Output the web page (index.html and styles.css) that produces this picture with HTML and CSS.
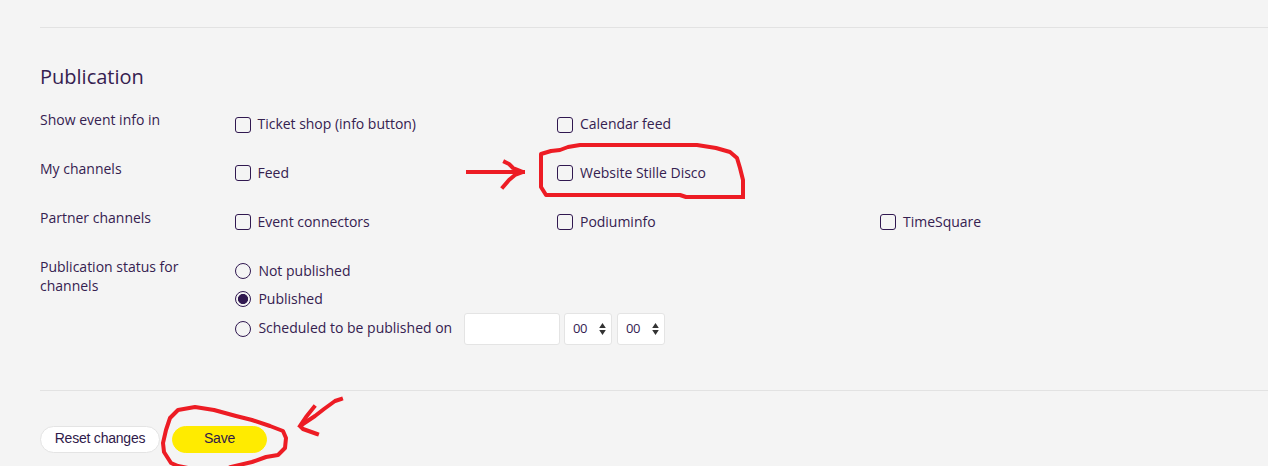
FILE: index.html
```
<!DOCTYPE html>
<html lang="en">
<head>
<meta charset="utf-8">
<title>Publication</title>
<link rel="stylesheet" href="styles.css">
</head>
<body>
<main class="page">
  <section class="publication">
    <h2 class="title">Publication</h2>
    <div class="row">
      <div class="label">Show event info in</div>
      <div class="options">
        <label class="option"><span class="box"></span><span class="text">Ticket shop (info button)</span></label>
        <label class="option"><span class="box"></span><span class="text">Calendar feed</span></label>
      </div>
    </div>
    <div class="row raised">
      <div class="label">My channels</div>
      <div class="options">
        <label class="option"><span class="box"></span><span class="text">Feed</span></label>
        <label class="option"><span class="box"></span><span class="text">Website Stille Disco</span></label>
      </div>
    </div>
    <div class="row raised">
      <div class="label">Partner channels</div>
      <div class="options">
        <label class="option"><span class="box"></span><span class="text">Event connectors</span></label>
        <label class="option"><span class="box"></span><span class="text">Podiuminfo</span></label>
        <label class="option"><span class="box"></span><span class="text">TimeSquare</span></label>
      </div>
    </div>
    <div class="row status">
      <div class="label">Publication status for channels</div>
      <div class="radios">
        <label class="choice"><span class="radio"></span><span class="text">Not published</span></label>
        <label class="choice second"><span class="radio checked"></span><span class="text">Published</span></label>
        <div class="choice schedule">
          <span class="radio"></span><span class="text">Scheduled to be published on</span>
          <span class="field date"></span>
          <span class="field time">00<svg class="arrows" width="7" height="12" viewBox="0 0 7 12"><path d="M3.5 0 6.8 5H.2zM3.5 12 6.8 7H.2z"/></svg></span>
          <span class="field time">00<svg class="arrows" width="7" height="12" viewBox="0 0 7 12"><path d="M3.5 0 6.8 5H.2zM3.5 12 6.8 7H.2z"/></svg></span>
        </div>
      </div>
    </div>
  </section>
  <footer class="actions">
    <button class="button reset"><span>Reset changes</span></button>
    <button class="button save"><span>Save</span></button>
  </footer>
  <svg class="marks" width="1268" height="466" viewBox="0 0 1268 466">
    <path d="M468 172H523M505 162 509 164 513 168 523 172 515 175 509 180 503 187"/>
    <path d="M743 197H686L680 195H546L541 187V154L551 151 560 150 568 147 580 145H697L716 148 730 152 737 158 740 168 743 180V197"/>
    <path d="M188 468 178 466 171 463 164 452 163 443 166 430 170 418 178 410 195 407 214 410 236 416 252 420 270 426 283 431 286 438 285 448 278 455 266 457 252 462 231 467"/>
    <path d="M341 399 335 401 324 409 315 416 300 426 303 429 317 434M314 407 306 417 300 426"/>
  </svg>
</main>
</body>
</html>
```
FILE: styles.css
```
* { box-sizing: border-box; }
body {
  margin: 0;
  background: #f4f4f4;
  color: #352150;
  font: 14px/19px "Open Sans", sans-serif;
}
.page {
  position: relative;
  height: 466px;
  overflow: hidden;
  padding: 27px 0 0 40px;
}
.publication {
  height: 363px;
  border-top: 1px solid #e2e2e2;
  padding-top: 35px;
}
.title {
  margin: 0;
  height: 47px;
  font-size: 20px;
  line-height: 28px;
  font-weight: 400;
}
.row { display: flex; height: 49px; }
.label { width: 195px; padding-right: 40px; }
.options { display: grid; grid-template-columns: 322px 323px 323px; }
.option { display: flex; align-items: flex-start; gap: 7px; }
.option .text { padding-top: 4px; letter-spacing: -0.02px; }
.option:not(:last-child) .text, .option:nth-child(-n+2) .text { margin-left: -0.5px; }
.option:nth-child(2) .text { margin-left: 0; }
.box {
  width: 16px;
  height: 16px;
  margin-top: 7px;
  border: 1px solid #301850;
  border-radius: 3px;
}
.raised .box { margin-top: 6px; }
.choice { display: flex; align-items: flex-start; height: 28px; padding-top: 4px; }
.choice .text { margin-left: 7.4px; white-space: nowrap; }
.radio {
  flex: none;
  width: 16px;
  height: 16px;
  margin-top: 2px;
  border: 1px solid #301850;
  border-radius: 50%;
}
.checked { background: radial-gradient(circle, #301850 4.7px, transparent 5.4px); }
.schedule { align-items: center; height: 32px; padding: 0; }
.schedule .radio { margin-top: 0; }
.schedule .text { width: 205.6px; margin-top: -3px; }
.field {
  height: 32px;
  background: #fff;
  border: 1px solid #e4e4e4;
  border-radius: 3px;
}
.date { width: 96px; }
.time {
  display: flex;
  align-items: center;
  justify-content: space-between;
  width: 48px;
  margin-left: 4px;
  padding: 0 5px 2px 8px;
  font-size: 13px;
  letter-spacing: -0.3px;
}
.time + .time { margin-left: 5px; }
.arrows { fill: #333; margin-top: 2px; }
.actions {
  display: flex;
  gap: 12px;
  padding-top: 35px;
  border-top: 1px solid #e2e2e2;
}
.button {
  height: 27px;
  border: 1px solid #e4e4e4;
  border-radius: 14px;
  padding: 0 0 4px;
  background: #fff;
  color: #2f1a4a;
  font: 14px "Liberation Sans", sans-serif;
  letter-spacing: -0.22px;
}
.reset { width: 120px; }
.save { width: 95px; background: #ffeb00; border-color: #ffeb00; }
.marks {
  position: absolute;
  top: 0;
  left: 0;
  fill: none;
  stroke: #ed1c24;
  stroke-width: 4;
  stroke-linejoin: round;
  stroke-linecap: square;
  pointer-events: none;
}
```
